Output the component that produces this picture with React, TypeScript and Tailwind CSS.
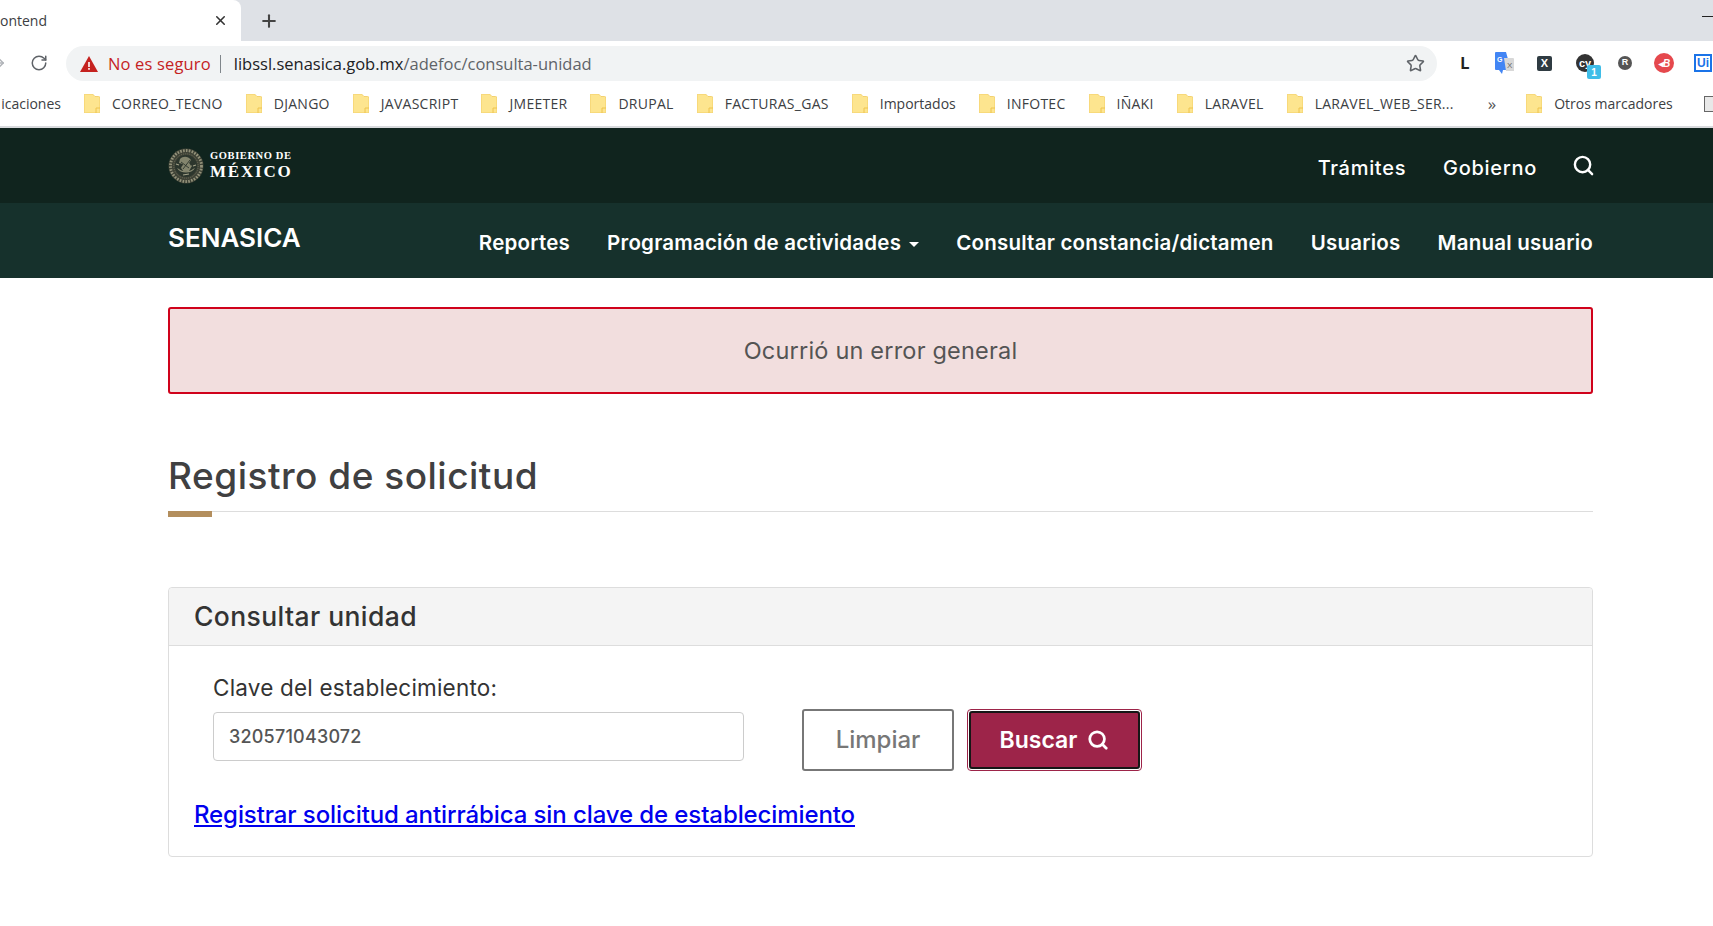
import { Search, RotateCw, ArrowRight, Plus, X, Star } from "lucide-react"

const bookmarks = ["CORREO_TECNO", "DJANGO", "JAVASCRIPT", "JMEETER", "DRUPAL", "FACTURAS_GAS", "Importados", "INFOTEC", "IÑAKI", "LARAVEL", "LARAVEL_WEB_SER..."]

function Folder() {
  return (
    <svg width="16" height="19" viewBox="0 0 16 19" className="shrink-0">
      <path d="M0 1.5A1.5 1.5 0 0 1 1.5 0h7L11 2.5h3.5A1.5 1.5 0 0 1 16 4v13.5a1.5 1.5 0 0 1-1.5 1.5h-13A1.5 1.5 0 0 1 0 17.5z" fill="#fde58f" stroke="#f0c95c" strokeWidth="0.8" />
      <path d="M12 19v-5h4" fill="none" stroke="#eec44f" strokeWidth="1" />
    </svg>
  )
}

function Emblem() {
  return (
    <svg width="36" height="36" viewBox="0 0 36 36" className="shrink-0">
      <circle cx="18" cy="18" r="17.500" fill="#3f4337" />
      <circle cx="18" cy="18" r="15.500" fill="none" stroke="#93927a" strokeWidth="2.800" strokeDasharray="1.600 1.300" />
      <circle cx="18" cy="18" r="12.200" fill="none" stroke="#6d6e5a" strokeWidth="1" strokeDasharray="1 1" />
      <circle cx="18" cy="18" r="11" fill="#2c362d" />
      <path d="M9 20c3 6 15 6 18 0l-2 1c-3 3-11 3-14 0z" fill="#8a8b72" />
      <path d="M12 11c3-3 8-3 11 1l-2 3 3 3-3 5-5 1-3-4 2-4-4-1z" fill="#83856d" />
      <path d="M13 14l8 6M22 12l-7 9M10 16l5 1M26 15l-4 2" stroke="#2c362d" strokeWidth="0.900" />
      <path d="M8 16l3 1M28 17l-3 1M15 27l6-1" stroke="#a5a48a" strokeWidth="1.100" />
    </svg>
  )
}

function Extensions() {
  return (
    <div className="flex items-center ml-[18px] text-[0px]">
      <span className="w-[20px] text-center text-[16px] font-bold text-[#222] font-['Inter',sans-serif]">L</span>
      <svg width="22" height="22" viewBox="0 0 22 22" className="ml-[18px]">
        <path d="M3 0h10l5 18h-8l-1 4-3-4H3a1 1 0 0 1-1-1V1a1 1 0 0 1 1-1z" fill="#4285f4" />
        <path d="M11 6h9a1 1 0 0 1 1 1v12h-8z" fill="#d8d8d8" />
        <text x="4" y="10" fontSize="7" fontWeight="700" fill="#fff" fontFamily="Liberation Sans, sans-serif">G</text>
        <text x="14" y="16" fontSize="8" fill="#666" fontFamily="Liberation Sans, sans-serif">X</text>
      </svg>
      <span className="ml-[22px] w-[15px] h-[15px] rounded-[2px] bg-[#2f3b42] flex items-center justify-center text-[11px] font-bold text-white font-['Liberation_Sans',sans-serif]">X</span>
      <span className="relative ml-[24px] w-[18px] h-[18px] rounded-full bg-[#333] flex items-center justify-center text-[11px] font-bold text-white font-['Liberation_Sans',sans-serif]">
        cy
        <span className="absolute left-[11px] top-[11px] w-[14px] h-[14px] rounded-[2px] bg-[#3fbde8] flex items-center justify-center text-[10px] text-white">1</span>
      </span>
      <span className="ml-[24px] w-[14px] h-[14px] rounded-full bg-[#555] flex items-center justify-center text-[9px] font-bold text-white font-['Liberation_Sans',sans-serif]">R</span>
      <span className="ml-[22px] w-[20px] h-[20px] rounded-full bg-[#e5484d] flex items-center justify-center text-[10px] font-bold italic text-white font-['Liberation_Sans',sans-serif]">◂B</span>
      <span className="ml-[20px] w-[18px] h-[18px] border-2 border-[#1a73e8] flex items-center justify-center text-[12px] font-bold text-[#1a73e8] font-['Liberation_Sans',sans-serif] shrink-0">Ui</span>
    </div>
  )
}

function BrowserChrome() {
  return (
    <div className="font-['Open_Sans',sans-serif] overflow-hidden">
      <div className="h-[41px] bg-[#dee1e6] flex items-stretch">
        <div className="w-[241px] bg-white rounded-tr-[8px] flex items-center justify-between pr-[13px] overflow-hidden">
          <span className="text-[14px] text-[#3c4043]">ontend</span>
          <X className="size-[15px] text-[#333]" strokeWidth={2.5} />
        </div>
        <div className="flex items-center ml-[18px]">
          <Plus className="size-[20px] text-[#444]" strokeWidth={2.5} />
        </div>
        <div className="ml-auto w-[11px] h-px bg-[#222] mt-[16px]" />
      </div>
      <div className="h-[40px] bg-white flex items-end">
        <ArrowRight className="size-[18px] text-[#b0b3b8] -ml-[11px] mb-[9px]" strokeWidth={2} />
        <RotateCw className="size-[18px] text-[#5f6368] ml-[23px] mb-[9px]" strokeWidth={2} />
        <div className="ml-[18px] w-[1371px] h-[35px] rounded-full bg-[#f1f3f4] flex items-center pl-[14px] pr-[12px] text-[16.500px]">
          <svg width="18" height="16" viewBox="0 0 18 16" className="shrink-0">
            <path d="M9 0l9 16H0z" fill="#c5221f" />
            <path d="M8.200 6h1.600v5H8.200zM8.200 12h1.600v1.800H8.200z" fill="#fff" />
          </svg>
          <span className="ml-[10px] pt-px text-[#c5221f] tracking-[0.15px]">No es seguro</span>
          <span className="ml-[9px] mr-[13px] w-px h-[18px] bg-[#80868b]" />
          <span className="pt-px text-[#202124]">libssl.senasica.gob.mx</span>
          <span className="pt-px text-[#5f6368]">/adefoc/consulta-unidad</span>
          <Star className="size-[19px] text-[#5f6368] ml-auto" strokeWidth={2} />
        </div>
        <div className="mb-[6px]">
          <Extensions />
        </div>
      </div>
      <div className="h-[45px] bg-white flex items-center text-[14px] text-[#3c4043] whitespace-nowrap">
        <span className="w-[61px] overflow-hidden text-right shrink-0">icaciones</span>
        {bookmarks.map((b) => (
          <div key={b} className="flex items-center gap-[12px] ml-[23px]">
            <Folder />
            <span className={b === "Importados" ? "tracking-normal" : "tracking-[0.27px]"}>{b}</span>
          </div>
        ))}
        <span className="ml-[34px] text-[17px] leading-none text-[#555]">»</span>
        <span className="ml-[13px] w-px h-[20px] bg-[#ccc]" />
        <div className="flex items-center gap-[12px] ml-[17px]">
          <Folder />
          <span>Otros marcadores</span>
        </div>
        <span className="ml-[18px] w-px h-[20px] bg-[#ccc]" />
        <span className="ml-[13px] w-[12px] h-[16px] border border-[#666] bg-[#e8e8e8] shrink-0" />
      </div>
      <div className="h-[2px] bg-[#d8dadd]" />
    </div>
  )
}

function SiteHeader() {
  return (
    <header className="font-['Inter',sans-serif] text-white">
      <div className="h-[75px] bg-[#10241e] pl-[168px] pr-[120px] flex items-center justify-between">
        <div className="flex items-center gap-[6px]">
          <Emblem />
          <div className="font-['Liberation_Serif',serif] font-bold leading-none">
            <div className="text-[10.500px] tracking-[0.6px]">GOBIERNO DE</div>
            <div className="text-[17px] tracking-[1.800px] mt-[1px]">MÉXICO</div>
          </div>
        </div>
        <nav className="flex items-center gap-[37px] text-[20px] font-medium tracking-[0.7px] mt-[4px]">
          <a>Trámites</a>
          <a>Gobierno</a>
          <Search className="size-[23px] -mt-[5px] -ml-[2px] -mr-[2px]" strokeWidth={2.5} />
        </nav>
      </div>
      <div className="h-[75px] bg-[#16312c] pl-[168px] pr-[120px] flex items-center justify-between">
        <span className="text-[26px] font-semibold -mt-[6px]">SENASICA</span>
        <nav className="flex items-center gap-[37px] text-[20.500px] font-semibold mt-[5px] tracking-[0.22px]">
          <a>Reportes</a>
          <a className="flex items-center gap-[8px]">
            Programación de actividades
            <span className="mt-[3px] border-x-[5px] border-t-[5px] border-x-transparent border-t-white" />
          </a>
          <a>Consultar constancia/dictamen</a>
          <a>Usuarios</a>
          <a>Manual usuario</a>
        </nav>
      </div>
    </header>
  )
}

export default function App() {
  return (
    <div className="min-h-[926px] bg-white overflow-hidden">
      <BrowserChrome />
      <SiteHeader />
      <main className="pl-[168px] pr-[120px] pt-[29px] font-['Inter',sans-serif]">
        <div className="h-[87px] rounded-[3px] border-2 border-[#d0021b] bg-[#f2dede] flex items-center justify-center text-[23.500px] tracking-[0.2px] text-[#545454] pt-px">
          Ocurrió un error general
        </div>

        <h1 className="mt-[58px] text-[37px] leading-[48px] font-medium text-[#404041] tracking-[0.5px]">Registro de solicitud</h1>
        <div className="relative mt-[11px] h-px bg-[#dddddd]">
          <div className="absolute left-0 top-0 w-[44px] h-[6px] bg-[#b38e5d]" />
        </div>

        <section className="mt-[75px] h-[270px] rounded-[4px] border border-[#dddddd]">
          <div className="h-[58px] bg-[#f4f4f4] border-b border-[#dddddd] rounded-t-[4px] flex items-center pl-[25px] text-[26.500px] tracking-[0.4px] font-medium text-[#333]">
            Consultar unidad
          </div>
          <div className="pl-[25px] pt-[28px]">
            <div className="pl-[19px] flex items-start">
              <div>
                <label className="block text-[22.500px] tracking-[0.2px] leading-[28px] text-[#333]">Clave del establecimiento:</label>
                <input readOnly value="320571043072" className="mt-[10px] block w-[531px] h-[49px] rounded-[4px] border border-[#cccccc] px-[15px] text-[18px] tracking-[0.2px] text-[#555] font-medium outline-none" />
              </div>
              <div className="flex gap-[13px] mt-[35px] ml-[58px]">
                <button className="w-[152px] h-[62px] rounded-[3px] border-2 border-[#777] bg-white text-[24px] font-medium text-[#777]">Limpiar</button>
                <button className="w-[175px] h-[62px] rounded-[4px] border border-[#9d2449] p-px">
                  <span className="w-full h-full rounded-[3px] border-2 border-[#161616] bg-[#9d2449] flex items-center justify-center gap-[10px] text-[23px] font-semibold text-white">
                    Buscar
                    <Search className="size-[22px]" strokeWidth={3} />
                  </span>
                </button>
              </div>
            </div>
            <a className="block mt-[28px] text-[24px] tracking-[-0.1px] leading-[32px] font-medium text-[#0000ee] underline">
              Registrar solicitud antirrábica sin clave de establecimiento
            </a>
          </div>
        </section>
      </main>
    </div>
  )
}
